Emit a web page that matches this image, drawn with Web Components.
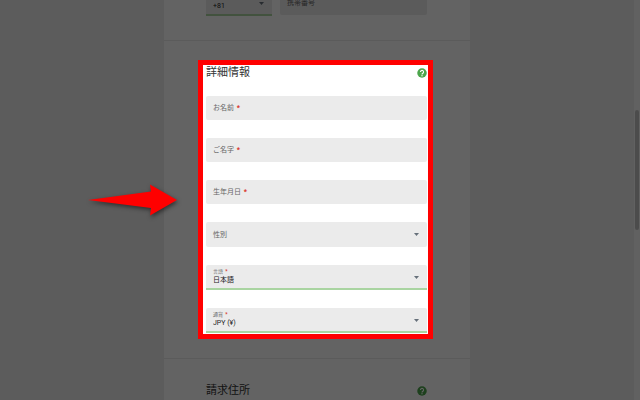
<!DOCTYPE html>
<html lang="ja">
<head>
<meta charset="utf-8">
<meta name="viewport" content="width=device-width, initial-scale=1">
<title>詳細情報</title>
<style>
  body { margin: 0; }
  .scrolled { margin-top: -9px; --section-top: 0px; --section-bottom: 24px; }
  .phone { display: grid; grid-template-columns: 9fr 20fr; gap: 8px; align-items: start; }
</style>
</head>
<body>
<account-page>
  <form-section class="scrolled">
    <div slot="fields" class="phone">
      <select-field value="+81"></select-field>
      <text-field label="携帯番号"></text-field>
    </div>
  </form-section>
  <form-section heading="詳細情報">
    <text-field slot="fields" label="お名前" required></text-field>
    <text-field slot="fields" label="ご名字" required></text-field>
    <text-field slot="fields" label="生年月日" required></text-field>
    <select-field slot="fields" label="性別"></select-field>
    <select-field slot="fields" label="言語" value="日本語" required></select-field>
    <select-field slot="fields" label="通貨" value="JPY (¥)" required></select-field>
    <spot-light slot="overlay"></spot-light>
  </form-section>
  <form-section heading="請求住所"></form-section>
</account-page>

<script>
class AccountPage extends HTMLElement {
  constructor() {
    super();
    this.attachShadow({ mode: 'open' });
    this.shadowRoot.innerHTML = `
      <style>
        :host {
          display: grid; grid-template: minmax(0, 1fr) / 1fr 6px;
          height: 100vh; overflow: hidden; background: #ececec; color: #333;
          font: 7px/8px Roboto, "Noto Sans CJK JP", sans-serif;
        }
        main { width: min(306px, 100%); margin: 0 auto; background: #fff; }
        .scrollbar { background: #fafafa; padding: 0 1px; display: grid; grid-template-rows: 11fr 12fr 17fr; }
        .thumb { grid-row: 2; background: #c4c4c4; border-radius: 2px; }
      </style>
      <main><slot></slot></main>
      <div class="scrollbar"><div class="thumb"></div></div>
    `;
  }
}

class FormSection extends HTMLElement {
  connectedCallback() {
    const heading = this.getAttribute('heading');
    this.attachShadow({ mode: 'open' });
    this.shadowRoot.innerHTML = `
      <style>
        :host {
          display: block; position: relative;
          padding: var(--section-top, 24px) 43px var(--section-bottom, 25px) 42px;
          border-bottom: 1px solid #ebebeb;
        }
        header { display: flex; align-items: center; justify-content: space-between; margin-bottom: 15px; }
        h2 { margin: 0; font-size: 11px; line-height: 16px; font-weight: 400; }
        .fields { display: grid; gap: 18px; }
      </style>
      ${heading ? `<header><h2>${heading}</h2><help-button></help-button></header>` : ''}
      <div class="fields"><slot name="fields"></slot></div>
      <slot name="overlay"></slot>
    `;
  }
}

class HelpButton extends HTMLElement {
  constructor() {
    super();
    this.attachShadow({ mode: 'open' });
    this.shadowRoot.innerHTML = `
      <style>
        :host { display: block; }
        button { display: block; appearance: none; border: 0; padding: 0; background: none; cursor: pointer; }
        svg { display: block; width: 10px; height: 10px; }
      </style>
      <button type="button" aria-label="ヘルプ">
        <svg viewBox="0 0 20 20">
          <circle cx="10" cy="10" r="9.5" fill="#4ca64c"/>
          <path d="M6.9 8a3.1 3.1 0 1 1 5 2.4c-1.1.8-1.9 1.3-1.9 2.7" fill="none" stroke="#fff" stroke-width="2.2"/>
          <circle cx="10" cy="15.6" r="1.4" fill="#fff"/>
        </svg>
      </button>
    `;
  }
}

const fieldStyle = `
  :host { display: block; }
  .field { display: grid; background: #ebebeb; border-radius: 2px; }
  label, input, select, svg { grid-area: 1 / 1; }
  label { align-self: center; justify-self: start; padding-left: 7px; color: #666; pointer-events: none; z-index: 1; }
  b { color: #d93025; margin-left: 1px; }
  input, select {
    appearance: none; box-sizing: border-box; width: 100%; min-width: 0; height: 24px; margin: 0;
    border: 0; border-radius: 2px; padding: 0 7px; background: none; color: #222; font: inherit; outline: 0;
  }
`;

function labelText(el) {
  const star = el.hasAttribute('required') ? ' <b>*</b>' : '';
  return (el.getAttribute('label') || '') + star;
}

class TextField extends HTMLElement {
  connectedCallback() {
    this.attachShadow({ mode: 'open' });
    this.shadowRoot.innerHTML = `
      <style>${fieldStyle}</style>
      <div class="field">
        <label for="control">${labelText(this)}</label>
        <input id="control" type="text">
      </div>
    `;
  }
}

class SelectField extends HTMLElement {
  connectedCallback() {
    const value = this.getAttribute('value') || '';
    const label = labelText(this);
    this.attachShadow({ mode: 'open' });
    this.shadowRoot.innerHTML = `
      <style>
        ${fieldStyle}
        select { height: 25px; }
        svg { width: 5px; height: 3px; place-self: center end; margin-right: 8px; pointer-events: none; }
        .filled { border-radius: 2px 2px 0 0; }
        .filled select { border-bottom: 2px solid #a9d4a1; border-radius: 0; padding-top: 7px; }
        .filled label { align-self: start; padding-top: 2px; font-size: 5px; }
      </style>
      <div class="field ${value ? 'filled' : ''}">
        ${label ? `<label for="control">${label}</label>` : ''}
        <select id="control" ${label ? '' : 'aria-label="国番号"'}><option>${value}</option></select>
        <svg viewBox="0 0 5 3"><path d="M0 0h5L2.5 3z" fill="#66707a"/></svg>
      </div>
    `;
  }
}

// Dims everything around a framed area and points an arrow at it
class SpotLight extends HTMLElement {
  constructor() {
    super();
    this.attachShadow({ mode: 'open' });
    this.shadowRoot.innerHTML = `
      <style>
        :host { position: absolute; inset: 19px 37px 19px 34px; z-index: 10; pointer-events: none; }
        .frame {
          box-sizing: border-box; height: 100%; border: 5px solid #f00;
          box-shadow: 0 0 0 2000px rgba(0,0,0,.61);
        }
        svg {
          position: absolute; right: 100%; top: 50%; width: 92px; height: 32px;
          margin: -16px 20px 0 0; overflow: visible;
          filter: drop-shadow(1px 2px 2px rgba(0,0,0,.5));
        }
      </style>
      <div class="frame"></div>
      <svg viewBox="0 0 92 32"><path d="M2 16L65 7.5 64 .5 91 16 64 31.5 65 24z" fill="#f00"/></svg>
    `;
  }
}

customElements.define('account-page', AccountPage);
customElements.define('help-button', HelpButton);
customElements.define('form-section', FormSection);
customElements.define('text-field', TextField);
customElements.define('select-field', SelectField);
customElements.define('spot-light', SpotLight);
</script>
</body>
</html>
